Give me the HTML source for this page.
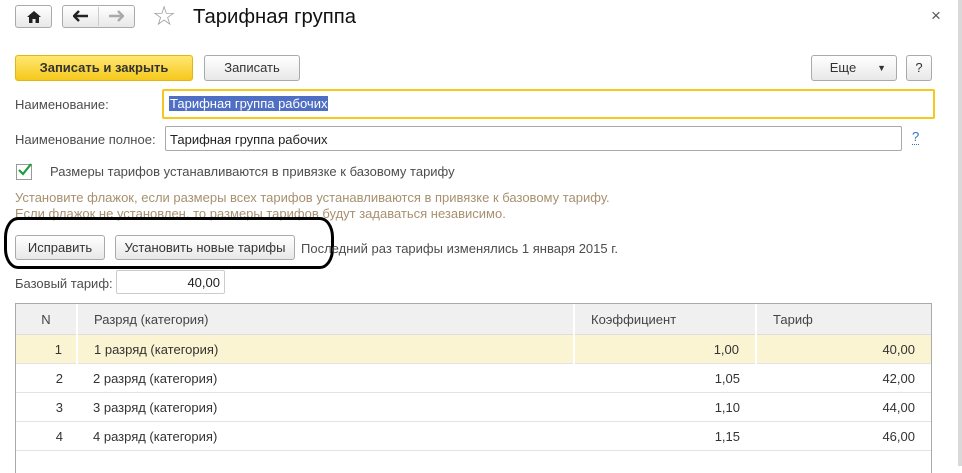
<!DOCTYPE html>
<html><head><meta charset="utf-8"><style>
body{margin:0;width:962px;height:466px;background:#fff;font-family:"Liberation Sans",Arial,sans-serif;font-size:13px;color:#333;position:relative;overflow:hidden}
.a{position:absolute}
.btn{position:absolute;border:1px solid #aaa;border-radius:3px;background:linear-gradient(#fff,#e8e8e8);text-align:center;box-sizing:border-box;color:#333}
.lbl{position:absolute;color:#4d4d4d}
.inp{position:absolute;border:1px solid #aaa;border-radius:2px;box-sizing:border-box;background:#fff}
table{border-collapse:collapse;position:absolute;left:16px;top:304px;width:915px;font-size:13px}
td{height:28px;border-bottom:1px solid #e3e3e3;padding:0 16px;color:#333}
th{height:30px;background:#f0f0f0;font-weight:normal;text-align:left;padding:0 16px;border-right:2px solid #fff;color:#444;border-bottom:1px solid #ddd}
.r{text-align:right}
</style></head><body>
<div class="a" style="right:0;top:0;width:4px;height:466px;background:#d9d9d9"></div>
<div class="btn" style="left:15px;top:5px;width:37px;height:23px"><svg width="14" height="12" style="margin-top:5px" viewBox="0 0 14 12"><path d="M7 0 L14 6 H12 V12 H8.5 V8 H5.5 V12 H2 V6 H0Z" fill="#222"/></svg></div>
<div class="btn" style="left:62px;top:5px;width:73px;height:23px"></div>
<div class="a" style="left:98px;top:7px;width:1px;height:19px;background:#ccc"></div>
<svg class="a" style="left:73px;top:10px" width="16" height="12" viewBox="0 0 16 12"><path d="M1 6 H15 M6 1 L1 6 L6 11" stroke="#222" stroke-width="2.4" fill="none"/></svg>
<svg class="a" style="left:108px;top:10px" width="16" height="12" viewBox="0 0 16 12"><path d="M1 6 H15 M10 1 L15 6 L10 11" stroke="#aaa" stroke-width="2.4" fill="none"/></svg>
<div class="a" style="left:152px;top:1px;font-size:27px;color:#999">&#9734;</div>
<div class="a" style="left:193px;top:6px;font-size:20.3px;color:#111">Тарифная группа</div>
<div class="a" style="left:931px;top:6px;font-size:17px;color:#555">×</div>
<div class="btn" style="left:15px;top:55px;width:178px;height:26px;background:linear-gradient(#ffe872,#f5c81b);border-color:#e3b512;font-weight:bold;line-height:24px;color:#333">Записать и закрыть</div>
<div class="btn" style="left:204px;top:55px;width:96px;height:26px;line-height:24px">Записать</div>
<div class="btn" style="left:811px;top:55px;width:86px;height:26px;line-height:24px;padding-right:22px">Еще<span class="a" style="right:10px;top:0;font-size:9px">&#9660;</span></div>
<div class="btn" style="left:906px;top:55px;width:26px;height:26px;line-height:24px">?</div>
<div class="lbl" style="left:15px;top:97px">Наименование:</div>
<div class="inp" style="left:162px;top:89px;width:773px;height:30px;border:2px solid #f5c81b"><span class="a" style="left:5px;top:5px;background:#4f6fc4;color:#fff;padding:0 1px">Тарифная группа рабочих</span></div>
<div class="lbl" style="left:15px;top:132px">Наименование полное:</div>
<div class="inp" style="left:165px;top:126px;width:737px;height:25px"><span class="a" style="left:4px;top:5px;color:#222">Тарифная группа рабочих</span></div>
<div class="a" style="left:912px;top:130px;color:#2b75c2;border-bottom:1px dotted #2b75c2;line-height:14px">?</div>
<div class="a" style="left:16px;top:164px;width:14px;height:14px;border:1px solid #999;background:#fff"><svg width="16" height="16" class="a" style="left:0;top:-3px" viewBox="0 0 16 16"><path d="M2 8 L6 12 L14 2" stroke="#1a9c3c" stroke-width="2.2" fill="none"/></svg></div>
<div class="lbl" style="left:50px;top:164px">Размеры тарифов устанавливаются в привязке к базовому тарифу</div>
<div class="a" style="left:15px;top:190px;color:#a89070;font-size:13px;line-height:16px">Установите флажок, если размеры всех тарифов устанавливаются в привязке к базовому тарифу.<br>Если флажок не установлен, то размеры тарифов будут задаваться независимо.</div>
<div class="a" style="left:4px;top:217px;width:330px;height:52px;border:3px solid #000;border-radius:14px/20px;box-sizing:border-box"></div>
<div class="btn" style="left:15px;top:235px;width:90px;height:25px;line-height:23px">Исправить</div>
<div class="btn" style="left:115px;top:235px;width:180px;height:25px;line-height:23px">Установить новые тарифы</div>
<div class="lbl" style="left:301px;top:241px">Последний раз тарифы изменялись 1 января 2015 г.</div>
<div class="lbl" style="left:15px;top:276px">Базовый тариф:</div>
<div class="inp" style="left:116px;top:270px;width:109px;height:24px;border-color:#ccc"><span class="a" style="right:4px;top:4px;color:#222">40,00</span></div>
<table>
<tr><th style="width:28px;text-align:center">N</th><th style="width:463px">Разряд (категория)</th><th style="width:148px">Коэффициент</th><th style="border-right:none">Тариф</th></tr>
<tr style="background:#fbf4d3"><td class="r" style="padding-right:14px;border-right:2px solid #fff">1</td><td style="border-right:2px solid #fff">1 разряд (категория)</td><td class="r" style="border-right:2px solid #fff">1,00</td><td class="r">40,00</td></tr>
<tr><td class="r" style="padding-right:14px">2</td><td>2 разряд (категория)</td><td class="r">1,05</td><td class="r">42,00</td></tr>
<tr><td class="r" style="padding-right:14px">3</td><td>3 разряд (категория)</td><td class="r">1,10</td><td class="r">44,00</td></tr>
<tr><td class="r" style="padding-right:14px">4</td><td>4 разряд (категория)</td><td class="r">1,15</td><td class="r">46,00</td></tr>
</table>
<div class="a" style="left:15px;top:303px;width:917px;height:170px;border:1px solid #aaa;border-bottom:none;box-sizing:border-box;z-index:2"></div>
</body></html>
